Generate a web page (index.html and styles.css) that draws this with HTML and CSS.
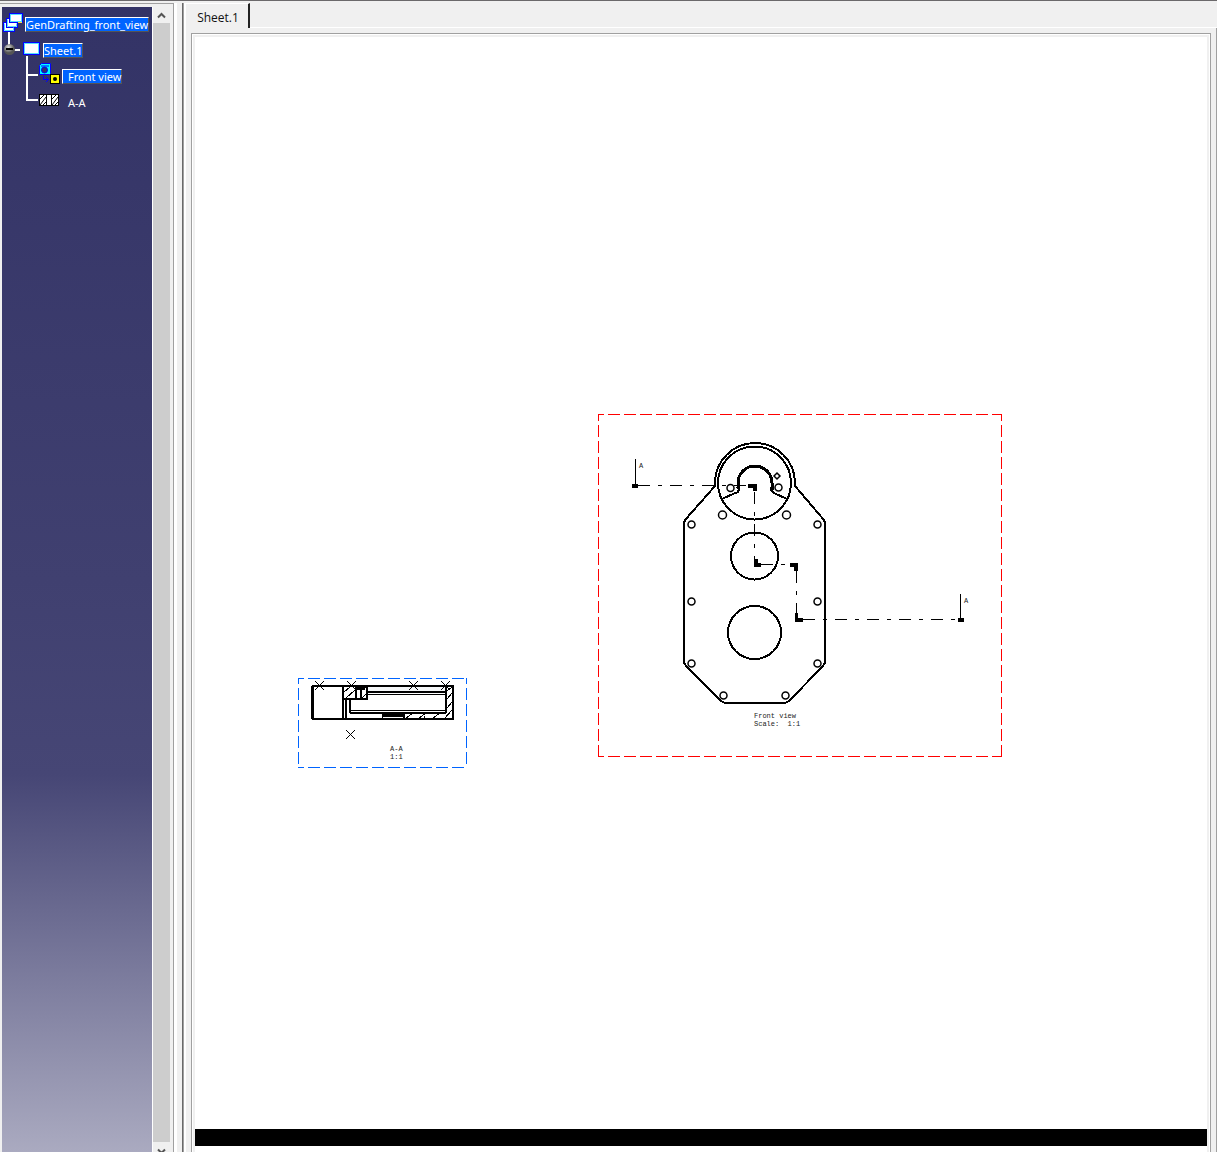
FILE: index.html
```
<!DOCTYPE html>
<html lang="en">
<head>
    <meta charset="UTF-8">
    <meta name="viewport" content="width=device-width, initial-scale=1.0">
    <title>GenDrafting_front_view</title>
    <link rel="stylesheet" href="styles.css">
</head>
<body>
    <div class="app">
        <aside class="tree-pane">
            <nav class="tree">
                <ul>
                    <li>
                        <svg class="row-icon" width="23" height="26" viewBox="2 11 23 26">
                            <path d="M9 30V37" stroke="#fff" stroke-width="2"/>
                            <g fill="#fff" stroke="#00f">
                                <rect x="3.5" y="22.5" width="11" height="9"/>
                                <rect x="6.5" y="18.5" width="11" height="9"/>
                                <rect x="9.5" y="13.5" width="13" height="9"/>
                            </g>
                            <g fill="none" stroke="#5df">
                                <path d="M4.5 23.5v7h9v-3"/>
                                <path d="M7.5 19.5v7h9v-3"/>
                                <rect x="10.5" y="14.5" width="11" height="7"/>
                            </g>
                            <path d="M18 22.5h4" stroke="#fd4"/>
                        </svg>
                        <a href="#" class="label selected">GenDrafting_front_view</a>
                    </li>
                    <li>
                        <svg class="row-icon" width="41" height="26" viewBox="2 37 41 26">
                            <defs>
                                <radialGradient id="ball" cx="40%" cy="30%">
                                    <stop offset="0" stop-color="#ddd"/>
                                    <stop offset="1" stop-color="#555"/>
                                </radialGradient>
                            </defs>
                            <path d="M9 37V45M14 50H20M27 56V63" stroke="#fff" stroke-width="2"/>
                            <circle cx="9.5" cy="49.5" r="5.5" fill="url(#ball)"/>
                            <path d="M6 49H13" stroke="#000" stroke-width="2"/>
                            <rect x="23.5" y="42.5" width="16" height="12" fill="#fff" stroke="#00f"/>
                            <rect x="24.5" y="43.5" width="14" height="10" fill="#fff" stroke="#5df"/>
                        </svg>
                        <a href="#" class="label selected">Sheet.1</a>
                    </li>
                    <li>
                        <svg class="row-icon" width="60" height="26" viewBox="2 63 60 26">
                            <path d="M27 63V89M27 75H38" stroke="#fff" stroke-width="2"/>
                            <path d="M39.500 65.500L41.500 63.500H50.500V73.500L49.500 74.500H39.500Z" fill="#0ff" stroke="#00f"/>
                            <path d="M41 66H49" stroke="#00f"/>
                            <circle cx="44.500" cy="70" r="3" fill="#336" stroke="#00f"/>
                            <path d="M43.500 76V79.500H48M46 77L48.500 79.500L46 82" fill="none" stroke="#00f"/>
                            <rect x="50.5" y="74.500" width="9" height="9" fill="#ff0" stroke="#000"/>
                            <circle cx="55" cy="79" r="2" fill="#000"/>
                        </svg>
                        <a href="#" class="label selected indent">Front view</a>
                    </li>
                    <li>
                        <svg class="row-icon" width="60" height="26" viewBox="2 89 60 26">
                            <path d="M27 89V100H38" fill="none" stroke="#fff" stroke-width="2"/>
                            <rect x="39.5" y="94.5" width="19" height="11" fill="#fff" stroke="#000"/>
                            <path d="M46.500 94V106M51.500 94V106M40 99L44 95M40 105L46 97M43 105L46 102M52 99L56 95M52 105L58 97M55 105L58 102" stroke="#000"/>
                        </svg>
                        <a href="#" class="label indent">A-A</a>
                    </li>
                </ul>
            </nav>
            <div class="scrollbar">
                <button class="scroll-btn" aria-label="Scroll up">
                    <svg width="9" height="7" viewBox="0 0 9 7"><path d="M1 5.500L4.500 2L8 5.500" fill="none" stroke="#555" stroke-width="2"/></svg>
                </button>
                <div class="thumb"></div>
                <button class="scroll-btn down" aria-label="Scroll down">
                    <svg width="9" height="7" viewBox="0 0 9 7"><path d="M1 1.500L4.500 5L8 1.500" fill="none" stroke="#555" stroke-width="2"/></svg>
                </button>
            </div>
        </aside>
        <div class="splitter"></div>
        <main class="drawing-pane">
            <div class="tabs">
                <button class="tab">Sheet.1</button>
                <div class="tab-rest"></div>
            </div>
            <div class="frame">
                <div class="sheet">
                    <svg class="view section-view" width="169" height="90" viewBox="298 678 169 90">
                        <g class="border-blue">
                            <path d="M298 678.5H467" stroke-dashoffset="6"/>
                            <path d="M298 767.5H467" stroke-dashoffset="6"/>
                            <path d="M298.5 678V768" stroke-dashoffset="6"/>
                            <path d="M466.5 678V768" stroke-dashoffset="6"/>
                        </g>
                        <rect x="367" y="687" width="78" height="4" fill="#f4f6f8"/>
                        <g class="heavy">
                            <rect x="313" y="686" width="140" height="33"/>
                            <path d="M343 686V719M343 699H367V686M356 686V699M361 690V699M367 692H446M446 686V713M350 713H446"/>
                        </g>
                        <g class="thin">
                            <path d="M311.500 686V719M346.500 699V719M349.500 699V713M350.500 699V713M350 710.500H446M367 694.500H446M345.500 699V719"/>
                            <path d="M344 692L350 687M346 698L355 690M362 698L366 694M363 690L366 687"/>
                            <path d="M406 718L413 713M419 718L426 713M424 718V716M433 718L440 713M445 718L452 710M447 708L452 702M447 699L452 693M447 691L452 687"/>
                        </g>
                        <path d="M357 686H365V690H357ZM382 714H405V719H403V717H383V719H382Z" fill="#000"/>
                        <g class="thin">
                            <path d="M315 681L324 690M324 681L315 690M347 681L356 690M356 681L347 690M409 681L418 690M418 681L409 690M441 681L450 690M450 681L441 690M346 730L355 739M355 730L346 739"/>
                        </g>
                        <text x="390" y="751">A-A</text>
                        <text x="390" y="759">1:1</text>
                    </svg>

                    <svg class="view front-view" width="404" height="343" viewBox="598 414 404 343">
                        <g class="border-red">
                            <path d="M598 414.5H1002" stroke-dashoffset="6"/>
                            <path d="M598 756.5H1002" stroke-dashoffset="6"/>
                            <path d="M598.5 414V757" stroke-dashoffset="5"/>
                            <path d="M1001.5 414V757" stroke-dashoffset="5"/>
                        </g>
                        <!-- housing outline -->
                        <g class="outline">
                            <path d="M715 486L685 520L684 523V663L687 667L721 701L725 703H785L789 701L822 667L825 663V523L824 520L795 486"/>
                            <path d="M715 487V483A40 40 0 0 1 795 483V487"/>
                            <circle cx="754.5" cy="483" r="36.5"/>
                            <circle cx="754.5" cy="556" r="23.5"/>
                            <circle cx="754.5" cy="632.5" r="26.5"/>
                            <path d="M737 487L739 489L738 492L733 494L722 499M771 487V490L774 493L787 499"/>
                        </g>
                        <path class="boss" d="M738 489V483A17 17 0 0 1 772 483V490"/>
                        <!-- holes -->
                        <g class="hole">
                            <path d="M777 473L780 476L777 479L774 476Z"/>
                            <circle cx="730.5" cy="488" r="3.5"/>
                            <circle cx="778.5" cy="487.5" r="3.5"/>
                            <circle cx="722.5" cy="515" r="4"/>
                            <circle cx="786.5" cy="515" r="4"/>
                            <circle cx="691.5" cy="524.5" r="3.5"/>
                            <circle cx="817.5" cy="524.5" r="3.5"/>
                            <circle cx="691.5" cy="601.5" r="3.5"/>
                            <circle cx="817.5" cy="601.5" r="3.5"/>
                            <circle cx="691.5" cy="663.5" r="3.5"/>
                            <circle cx="817.5" cy="663.5" r="3.5"/>
                            <circle cx="723.5" cy="695.5" r="3.5"/>
                            <circle cx="785.5" cy="695.5" r="3.5"/>
                        </g>
                        <!-- section line A-A -->
                        <g class="axis">
                            <path d="M638 485.500H750"/>
                            <path d="M754.500 492V560"/>
                            <path d="M761 564.500H791"/>
                            <path d="M796.500 571V614"/>
                            <path d="M803 619.500H959"/>
                        </g>
                        <path class="thin" d="M635.500 459V484M960.500 594V619"/>
                        <path d="M632 484H638V488H632ZM748 484H757V491H753V488H748ZM754 559H758V563H761V567H754ZM790 563H798V571H794V567H790ZM795 613H798V618H803V622H795ZM958 618H964V622H958Z" fill="#000"/>
                        <text x="639" y="468">A</text>
                        <text x="964" y="603">A</text>
                        <text x="754" y="718">Front view</text>
                        <text x="754" y="726" xml:space="preserve">Scale:  1:1</text>
                    </svg>
                    <div class="sheet-edge"></div>
                </div>
            </div>
        </main>
    </div>
</body>
</html>
```
FILE: styles.css
```
* {
    box-sizing: border-box;
}
body {
    margin: 0;
    background: #f0f0f0;
    font-family: "Open Sans", "Noto Sans", sans-serif;
    font-size: 12px;
}
button {
    padding: 0;
    border: none;
    background: none;
    font: inherit;
}
.app {
    display: flex;
    height: 100vh;
    overflow: hidden;
    border-top: 1px solid #6b696b;
}
.tree-pane {
    display: flex;
    width: 174px;
    margin-top: 2px;
    padding: 3px 3px 0 2px;
    border-top: 1px solid #a0a0a0;
    border-right: 1px solid #a0a0a0;
}
.tree {
    flex: 1;
    overflow: hidden;
    padding-top: 4px;
    background: linear-gradient(#333366 0%, #404070 50%, #464675 67%, #aaaac0 100%);
}
.tree ul {
    margin: 0;
    padding: 0;
    list-style: none;
}
.tree li {
    display: flex;
    align-items: center;
    height: 26px;
}
.row-icon {
    flex: none;
    display: block;
}
.label {
    flex: none;
    height: 15px;
    border: 1px solid transparent;
    color: #fff;
    font-family: "Noto Sans", sans-serif;
    font-size: 11px;
    line-height: 13px;
    text-decoration: none;
    white-space: nowrap;
}
.label.selected {
    background: #0064ff;
    border-color: #fff #555 #555 #fff;
}
.label.indent {
    padding-left: 5px;
}
.scrollbar {
    display: flex;
    flex-direction: column;
    width: 18px;
    border-left: 1px solid #fff;
}
.scroll-btn {
    display: flex;
    justify-content: center;
    align-items: center;
    height: 16px;
}
.scroll-btn.down {
    height: 10px;
    align-items: flex-start;
    padding-top: 6px;
}
.thumb {
    flex: 1;
    background: #cdcdcd;
}
.splitter {
    width: 12px;
    margin-top: 2px;
    border-left: 3px solid #fff;
    border-right: 2px solid #fff;
    background: linear-gradient(90deg, #f0f0f0 5px, #696969 5px, #696969 6px, #a0a0a0 6px);
}
.drawing-pane {
    flex: 1;
    display: flex;
    flex-direction: column;
    min-width: 0;
}
.tabs {
    display: flex;
    height: 27px;
    padding-top: 2px;
}
.tab {
    width: 64px;
    padding: 3px 0 0 2px;
    border-top: 1px solid #fff;
    border-right: 2px solid #222;
    color: #111;
}
.tab-rest {
    flex: 1;
    border-bottom: 1px solid #fff;
}
.frame {
    flex: 1;
    display: flex;
    padding: 5px 5px 0 5px;
    border-right: 1px solid #a0a0a0;
}
.sheet {
    position: relative;
    flex: 1;
    display: flex;
    flex-direction: column;
    justify-content: flex-end;
    padding-bottom: 6px;
    border: 2px solid #f0f0f0;
    border-bottom: none;
    outline: 1px solid #fff;
    box-shadow: 0 0 0 2px #a0a0a0;
    margin: 2px 2px 0 2px;
    background: #fff;
}
.sheet-edge {
    height: 17px;
    background: #000;
}
.view {
    position: absolute;
    fill: none;
    stroke: none;
}
.section-view {
    left: 103px;
    top: 641px;
}
.front-view {
    left: 403px;
    top: 377px;
}
.view text {
    fill: #222;
    font-family: "Liberation Mono", monospace;
    font-size: 7px;
}
.border-blue {
    stroke: #0064ff;
    stroke-dasharray: 12 4;
}
.border-red {
    stroke: #f00;
    stroke-dasharray: 12 4;
}
.heavy {
    stroke: #000;
    stroke-width: 2;
    shape-rendering: crispEdges;
}
.outline {
    stroke: #000;
    stroke-width: 2;
    shape-rendering: crispEdges;
}
.boss {
    stroke: #000;
    stroke-width: 3;
    shape-rendering: crispEdges;
}
.hole {
    stroke: #000;
    stroke-width: 1.5;
}
.thin {
    stroke: #000;
    shape-rendering: crispEdges;
}
.axis {
    stroke: #000;
    stroke-dasharray: 12 8 4 8;
    shape-rendering: crispEdges;
}
```
